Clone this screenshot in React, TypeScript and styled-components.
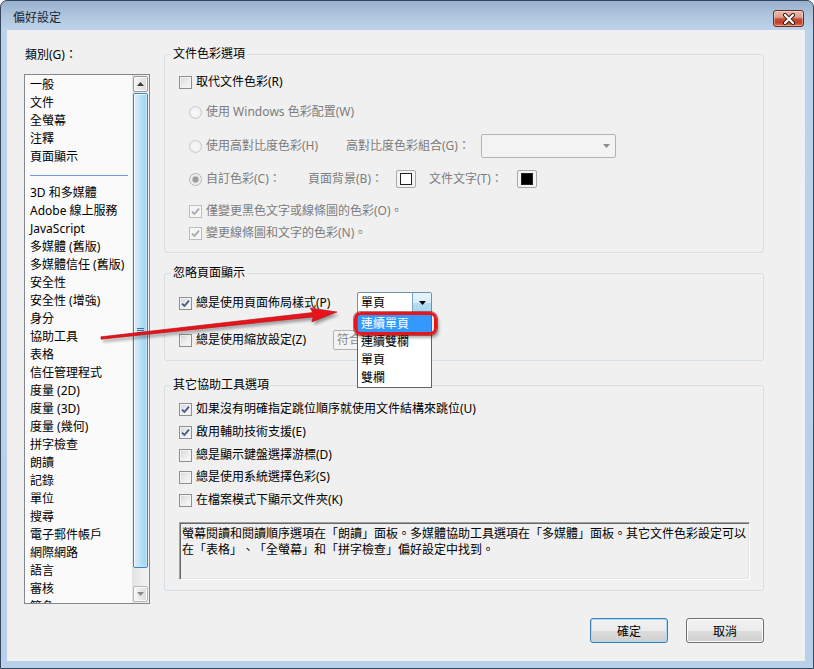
import React from "react";
import styled, { createGlobalStyle } from "styled-components";

const FONT = `"Noto Sans", "Noto Sans CJK TC", sans-serif`;

const GlobalStyle = createGlobalStyle`
  html, body { margin: 0; padding: 0; background: #ffffff; }
  body {
    font-family: ${FONT};
    font-size: 12px;
    line-height: 16px;
    color: #000;
    text-spacing-trim: space-all;
    font-kerning: none;
  }
  * { box-sizing: border-box; }
`;

const Window = styled.div`
  position: relative;
  width: 814px;
  height: 669px;
  border: 1px solid #34475d;
  border-radius: 7px 7px 0 0;
  background: linear-gradient(180deg, #98b1cd 0px, #b0c7df 16px, #bed3e9 29px, #bad2ea 29px, #b8d0e9 100%);
  display: flex;
  flex-direction: column;
  overflow: hidden;
`;

const TitleBar = styled.div`
  height: 29px;
  flex: none;
  display: flex;
  align-items: flex-start;
  justify-content: space-between;
  padding: 8px 9px 0 12px;
`;

const Title = styled.div`
  font-family: "Noto Sans CJK TC", sans-serif;
  font-size: 12px;
  line-height: 16px;
  color: #1b2633;
`;

const CloseButton = styled.div`
  margin-top: 1px;
  width: 31px;
  height: 17px;
  border: 1px solid #6d2a20;
  border-radius: 3px;
  background: linear-gradient(180deg, #ebb8ab 0%, #dd9e8e 42%, #c9503a 52%, #c13f29 78%, #d8795d 100%);
  box-shadow: inset 0 0 0 1px rgba(255, 255, 255, 0.35);
  display: flex;
  align-items: center;
  justify-content: center;
`;

const Frame = styled.div`
  flex: 1;
  display: flex;
  min-height: 0;
  padding: 0 8px 7px 6px;
`;

const Client = styled.div`
  flex: 1;
  display: flex;
  flex-direction: column;
  background: #f0f0f0;
  padding: 16px 41px 18px 17px;
`;

const Main = styled.div`
  display: flex;
  align-items: flex-start;
  gap: 14px;
`;

const LeftCol = styled.div`
  width: 126px;
  flex: none;
  display: flex;
  flex-direction: column;
`;

const Caption = styled.div`
  margin-top: 1px;
  padding-left: 1px;
  height: 16px;
  line-height: 16px;
`;

const ListBox = styled.div`
  margin-top: 11px;
  height: 530px;
  border: 1px solid #828790;
  background: #fafafa;
  display: flex;
`;

const ListItems = styled.ul`
  flex: 1;
  margin: 0;
  padding: 1px 4px 0 5px;
  list-style: none;
  overflow: hidden;
`;

const Item = styled.li`
  height: 18px;
  line-height: 18px;
  white-space: nowrap;
`;

const Separator = styled.li`
  height: 18px;
  display: flex;
  align-items: center;
  &::after {
    content: "";
    flex: 1;
    height: 1px;
    background: #6f9dd3;
  }
`;

const ScrollBar = styled.div`
  width: 17px;
  flex: none;
  display: flex;
  flex-direction: column;
  padding: 1px;
  background: linear-gradient(90deg, #e3e3e3 0%, #eeeeee 60%, #f2f2f2 100%);
`;

const ScrollBtn = styled.div<{ $dim?: boolean }>`
  height: 16px;
  flex: none;
  border: 1px solid ${(p) => (p.$dim ? "#b5b5b5" : "#9a9a9a")};
  border-radius: 2px;
  background: linear-gradient(90deg, #f6f6f6 0%, #e9e9e9 50%, #dadada 100%);
  box-shadow: inset 0 0 0 1px #fbfbfb;
  display: flex;
  align-items: center;
  justify-content: center;
`;

const Thumb = styled.div`
  height: 475px;
  margin-top: 1px;
  flex: none;
  border: 1px solid #3f84bd;
  border-radius: 2px;
  background: linear-gradient(90deg, #d9effb 0%, #c5e6f8 35%, #aedcf4 65%, #9fd3f0 100%);
  box-shadow: inset 1px 1px 0 #eef8fd, inset -1px -1px 0 #c8e7f8;
  display: flex;
  align-items: center;
  justify-content: center;
`;

const Grip = styled.div`
  width: 7px;
  height: 5px;
  background: repeating-linear-gradient(180deg, #3f6f97 0px, #3f6f97 1px, transparent 1px, transparent 2px);
`;

const DownBtn = styled(ScrollBtn)`
  margin-top: auto;
`;

const RightCol = styled.div`
  flex: 1;
  display: flex;
  flex-direction: column;
`;

const Group = styled.fieldset<{ $mt?: number; $pb: number }>`
  margin: ${(p) => p.$mt ?? 0}px 0 0;
  padding: 0 13px ${(p) => p.$pb}px 14px;
  border: 1px solid #d5dfe5;
  border-radius: 3px;
  min-width: 0;
`;

const Legend = styled.legend`
  padding: 0 2px;
  margin-left: -8px;
  height: 16px;
  line-height: 16px;
`;

const Row = styled.div<{ $mt: number; $h?: number; $indent?: number }>`
  display: flex;
  align-items: center;
  height: ${(p) => p.$h ?? 20}px;
  margin-top: ${(p) => p.$mt}px;
  padding-left: ${(p) => p.$indent ?? 0}px;
`;

const Cell = styled.div<{ $w: number }>`
  flex: none;
  width: ${(p) => p.$w}px;
  display: flex;
  align-items: center;
`;

const Text = styled.span<{ $dim?: boolean }>`
  color: ${(p) => (p.$dim ? "#7c7c7c" : "#000")};
  white-space: nowrap;
  line-height: 16px;
`;

const Box = styled.span<{ $dim?: boolean }>`
  flex: none;
  width: 13px;
  height: 13px;
  margin-right: 4px;
  border: 1px solid ${(p) => (p.$dim ? "#bcbcbc" : "#8e8f8f")};
  background: ${(p) =>
    p.$dim ? "#f4f4f4" : "linear-gradient(135deg, #d2d4d8 0%, #e8e9eb 45%, #fbfbfb 100%)"};
  box-shadow: inset 0 0 0 1px ${(p) => (p.$dim ? "#f8f8f8" : "#f3f3f3")};
  display: flex;
  align-items: center;
  justify-content: center;
`;

const RadioDot = styled.span<{ $on?: boolean }>`
  flex: none;
  width: 13px;
  height: 13px;
  margin-right: 4px;
  border-radius: 50%;
  border: 1px solid ${(p) => (p.$on ? "#b4b4b4" : "#cacaca")};
  background: ${(p) =>
    p.$on
      ? "radial-gradient(circle, #9b9b9b 0 2.6px, #cfcfcf 3.2px, #e9e9e9 4px, #f4f4f4 5.5px)"
      : "radial-gradient(circle, #f6f6f6 0 3px, #ececec 5.5px)"};
`;

const Swatch = styled.span<{ $gap?: number }>`
  flex: none;
  width: 20px;
  height: 18px;
  margin-right: ${(p) => p.$gap ?? 0}px;
  border: 1px solid #a9a9a9;
  border-radius: 2px;
  background: #f4f4f4;
  display: flex;
  align-items: center;
  justify-content: center;
`;

const SwatchFill = styled.span<{ $color: string }>`
  width: 12px;
  height: 12px;
  border: 1px solid #222;
  background: ${(p) => p.$color};
`;

const ComboWrap = styled.div<{ $w: number; $h: number }>`
  position: relative;
  flex: none;
  width: ${(p) => p.$w}px;
  height: ${(p) => p.$h}px;
`;

const ComboField = styled.div<{ $active?: boolean }>`
  height: 100%;
  display: flex;
  align-items: center;
  padding-left: 3px;
  border: 1px solid ${(p) => (p.$active ? "#6e8fae" : "#b3b3b3")};
  border-radius: 2px;
  background: ${(p) => (p.$active ? "#ffffff" : "#f3f3f3")};
  color: ${(p) => (p.$active ? "#000" : "#8a8a8a")};
  overflow: hidden;
  white-space: nowrap;
`;

const ComboValue = styled.span`
  flex: 1;
`;

const ComboArrow = styled.span<{ $active?: boolean }>`
  align-self: stretch;
  width: ${(p) => (p.$active ? 19 : 17)}px;
  display: flex;
  align-items: center;
  justify-content: center;
  background: ${(p) =>
    p.$active ? "linear-gradient(180deg, #e7f5fd 0%, #d6eefb 48%, #b4dcf3 52%, #a5d3ef 100%)" : "transparent"};
  border-left: ${(p) => (p.$active ? "1px solid #7da2c3" : "none")};
`;

const DropList = styled.ul`
  position: absolute;
  top: 100%;
  left: 0;
  width: 100%;
  margin: 0;
  padding: 0;
  list-style: none;
  border: 1px solid #646464;
  background: #ffffff;
  z-index: 2;
`;

const DropItem = styled.li<{ $sel?: boolean }>`
  height: 18px;
  line-height: 18px;
  padding-left: 3px;
  white-space: nowrap;
  background: ${(p) => (p.$sel ? "#3399ff" : "transparent")};
  color: ${(p) => (p.$sel ? "#ffffff" : "#000")};
`;

const RedMark = styled.div`
  position: absolute;
  top: 20px;
  left: -3px;
  width: 83px;
  height: 23px;
  border: 3px solid #e8151b;
  border-radius: 7px;
  box-shadow: 0 0 0 1px rgba(130, 0, 0, 0.55), 2px 3px 3px rgba(0, 0, 0, 0.3);
  z-index: 3;
`;

const ReadOnlyBox = styled.div`
  margin-top: 12px;
  height: 58px;
  padding: 2px 2px;
  border: 1px solid;
  border-color: #a0a0a0 #ffffff #ffffff #a0a0a0;
  box-shadow: inset 1px 1px 0 #696969, inset -1px -1px 0 #e3e3e3;
  font-family: "Noto Sans CJK TC", sans-serif;
  line-height: 16px;
  text-spacing-trim: space-all;
  font-feature-settings: "palt" 0, "halt" 0, "chws" 0;
`;

const Footer = styled.div`
  margin-top: 14px;
  display: flex;
  justify-content: flex-end;
  gap: 18px;
`;

const Button = styled.button<{ $def?: boolean }>`
  width: 78px;
  height: 25px;
  padding: 0;
  font-family: ${FONT};
  font-size: 12px;
  color: #000;
  border: 1px solid ${(p) => (p.$def ? "#3c7fb1" : "#707070")};
  border-radius: 3px;
  background: linear-gradient(180deg, #f2f2f2 0%, #ebebeb 50%, #dddddd 51%, #cfcfcf 100%);
  box-shadow: inset 0 0 0 1px ${(p) => (p.$def ? "#a8dcf5" : "#fbfbfb")};
`;

const Overlay = styled.svg`
  position: absolute;
  left: 0;
  top: 0;
  width: 814px;
  height: 669px;
  pointer-events: none;
  z-index: 5;
`;

const CheckMark = ({ dim }: { dim?: boolean }) => (
  <svg width="11" height="11" viewBox="0 0 11 11">
    <path d="M2 5.6 L4.4 8 L9 2.6" fill="none" stroke={dim ? "#a9a9a9" : "#445a86"} strokeWidth="1.8" />
  </svg>
);

const Check = ({ on, dim }: { on?: boolean; dim?: boolean }) => (
  <Box $dim={dim}>{on && <CheckMark dim={dim} />}</Box>
);

const TriUp = ({ color }: { color: string }) => (
  <svg width="7" height="4" viewBox="0 0 7 4">
    <path d="M0 4 L3.5 0 L7 4 Z" fill={color} />
  </svg>
);

const TriDown = ({ color, w = 7 }: { color: string; w?: number }) => (
  <svg width={w} height="4" viewBox={`0 0 ${w} 4`}>
    <path d={`M0 0 L${w} 0 L${w / 2} 4 Z`} fill={color} />
  </svg>
);

type Entry = string | null;
const categories: Entry[] = [
  "一般", "文件", "全螢幕", "注釋", "頁面顯示", null,
  "3D 和多媒體", "Adobe 線上服務", "JavaScript", "多媒體 (舊版)", "多媒體信任 (舊版)",
  "安全性", "安全性 (增強)", "身分", "協助工具", "表格", "信任管理程式",
  "度量 (2D)", "度量 (3D)", "度量 (幾何)", "拼字檢查", "朗讀", "記錄", "單位",
  "搜尋", "電子郵件帳戶", "網際網路", "語言", "審核", "簽名",
];

const otherOptions: { label: string; on: boolean; mt: number }[] = [
  { label: "如果沒有明確指定跳位順序就使用文件結構來跳位(U)", on: true, mt: 6 },
  { label: "啟用輔助技術支援(E)", on: true, mt: 3 },
  { label: "總是顯示鍵盤選擇游標(D)", on: false, mt: 3 },
  { label: "總是使用系統選擇色彩(S)", on: false, mt: 2 },
  { label: "在檔案模式下顯示文件夾(K)", on: false, mt: 3 },
];

export default function App() {
  return (
    <>
      <GlobalStyle />
      <Window>
        <TitleBar>
          <Title>偏好設定</Title>
          <CloseButton>
            <svg width="14" height="12" viewBox="0 0 14 12">
              <path d="M3 2 L11 10 M11 2 L3 10" stroke="#3a1a14" strokeWidth="4" strokeLinecap="round" />
              <path d="M3 2 L11 10 M11 2 L3 10" stroke="#ffffff" strokeWidth="2.2" strokeLinecap="round" />
            </svg>
          </CloseButton>
        </TitleBar>
        <Frame>
          <Client>
            <Main>
              <LeftCol>
                <Caption>類別(G)：</Caption>
                <ListBox>
                  <ListItems>
                    {categories.map((c, i) => (c === null ? <Separator key={i} /> : <Item key={i}>{c}</Item>))}
                  </ListItems>
                  <ScrollBar>
                    <ScrollBtn>
                      <TriUp color="#3b3b3b" />
                    </ScrollBtn>
                    <Thumb>
                      <Grip />
                    </Thumb>
                    <DownBtn $dim>
                      <TriDown color="#8a8a8a" />
                    </DownBtn>
                  </ScrollBar>
                </ListBox>
              </LeftCol>

              <RightCol>
                <Group $pb={9}>
                  <Legend>文件色彩選項</Legend>
                  <Row $mt={10}>
                    <Check />
                    <Text>取代文件色彩(R)</Text>
                  </Row>
                  <Row $mt={10} $indent={10}>
                    <RadioDot />
                    <Text $dim>使用 Windows 色彩配置(W)</Text>
                  </Row>
                  <Row $mt={12} $h={24} $indent={10}>
                    <Cell $w={157}>
                      <RadioDot />
                      <Text $dim>使用高對比度色彩(H)</Text>
                    </Cell>
                    <Cell $w={135}>
                      <Text $dim>高對比度色彩組合(G)：</Text>
                    </Cell>
                    <ComboWrap $w={135} $h={24}>
                      <ComboField>
                        <ComboValue />
                        <ComboArrow>
                          <TriDown color="#8c8c8c" />
                        </ComboArrow>
                      </ComboField>
                    </ComboWrap>
                  </Row>
                  <Row $mt={11} $indent={10}>
                    <Cell $w={119}>
                      <RadioDot $on />
                      <Text $dim>自訂色彩(C)：</Text>
                    </Cell>
                    <Cell $w={88}>
                      <Text $dim>頁面背景(B)：</Text>
                    </Cell>
                    <Swatch $gap={13}>
                      <SwatchFill $color="#ffffff" />
                    </Swatch>
                    <Cell $w={88}>
                      <Text $dim>文件文字(T)：</Text>
                    </Cell>
                    <Swatch>
                      <SwatchFill $color="#000000" />
                    </Swatch>
                  </Row>
                  <Row $mt={12} $indent={10}>
                    <Check on dim />
                    <Text $dim>僅變更黑色文字或線條圖的色彩(O)。</Text>
                  </Row>
                  <Row $mt={2} $indent={10}>
                    <Check on dim />
                    <Text $dim>變更線條圖和文字的色彩(N)。</Text>
                  </Row>
                </Group>

                <Group $mt={12} $pb={10}>
                  <Legend>忽略頁面顯示</Legend>
                  <Row $mt={11} $h={22}>
                    <Cell $w={178}>
                      <Check on />
                      <Text>總是使用頁面佈局樣式(P)</Text>
                    </Cell>
                    <ComboWrap $w={75} $h={22}>
                      <ComboField $active>
                        <ComboValue>單頁</ComboValue>
                        <ComboArrow $active>
                          <TriDown color="#000000" />
                        </ComboArrow>
                      </ComboField>
                      <DropList>
                        <DropItem $sel>連續單頁</DropItem>
                        <DropItem>連續雙欄</DropItem>
                        <DropItem>單頁</DropItem>
                        <DropItem>雙欄</DropItem>
                      </DropList>
                      <RedMark />
                    </ComboWrap>
                  </Row>
                  <Row $mt={16}>
                    <Cell $w={154}>
                      <Check />
                      <Text>總是使用縮放設定(Z)</Text>
                    </Cell>
                    <ComboWrap $w={90} $h={20}>
                      <ComboField>
                        <ComboValue>符合</ComboValue>
                      </ComboField>
                    </ComboWrap>
                  </Row>
                </Group>

                <Group $mt={16} $pb={10}>
                  <Legend>其它協助工具選項</Legend>
                  {otherOptions.map((o) => (
                    <Row key={o.label} $mt={o.mt}>
                      <Check on={o.on} />
                      <Text>{o.label}</Text>
                    </Row>
                  ))}
                  <ReadOnlyBox>
                    螢幕閱讀和閱讀順序選項在「朗讀」面板。多媒體協助工具選項在「多媒體」面板。其它文件色彩設定可以
                    <br />
                    在「表格」、「全螢幕」和「拼字檢查」偏好設定中找到。
                  </ReadOnlyBox>
                </Group>
              </RightCol>
            </Main>

            <Footer>
              <Button $def>確定</Button>
              <Button>取消</Button>
            </Footer>
          </Client>
        </Frame>

        <Overlay viewBox="0 0 814 669">
          <defs>
            <filter id="arrowShadow" x="-10%" y="-50%" width="120%" height="200%">
              <feGaussianBlur stdDeviation="1.6" />
            </filter>
          </defs>
          <g transform="translate(2 3)" opacity="0.35" filter="url(#arrowShadow)">
            <polygon points="99.9,335.8 311.8,311.5 309.2,306.9 336,311 310.8,320.9 312.2,315.9 100.1,338.2" fill="#000" />
          </g>
          <polygon
            points="99.9,335.8 311.8,311.5 309.2,306.9 336,311 310.8,320.9 312.2,315.9 100.1,338.2"
            fill="#e8141c"
            stroke="#b00c10"
            strokeWidth="0.6"
            strokeLinejoin="round"
          />
        </Overlay>
      </Window>
    </>
  );
}
